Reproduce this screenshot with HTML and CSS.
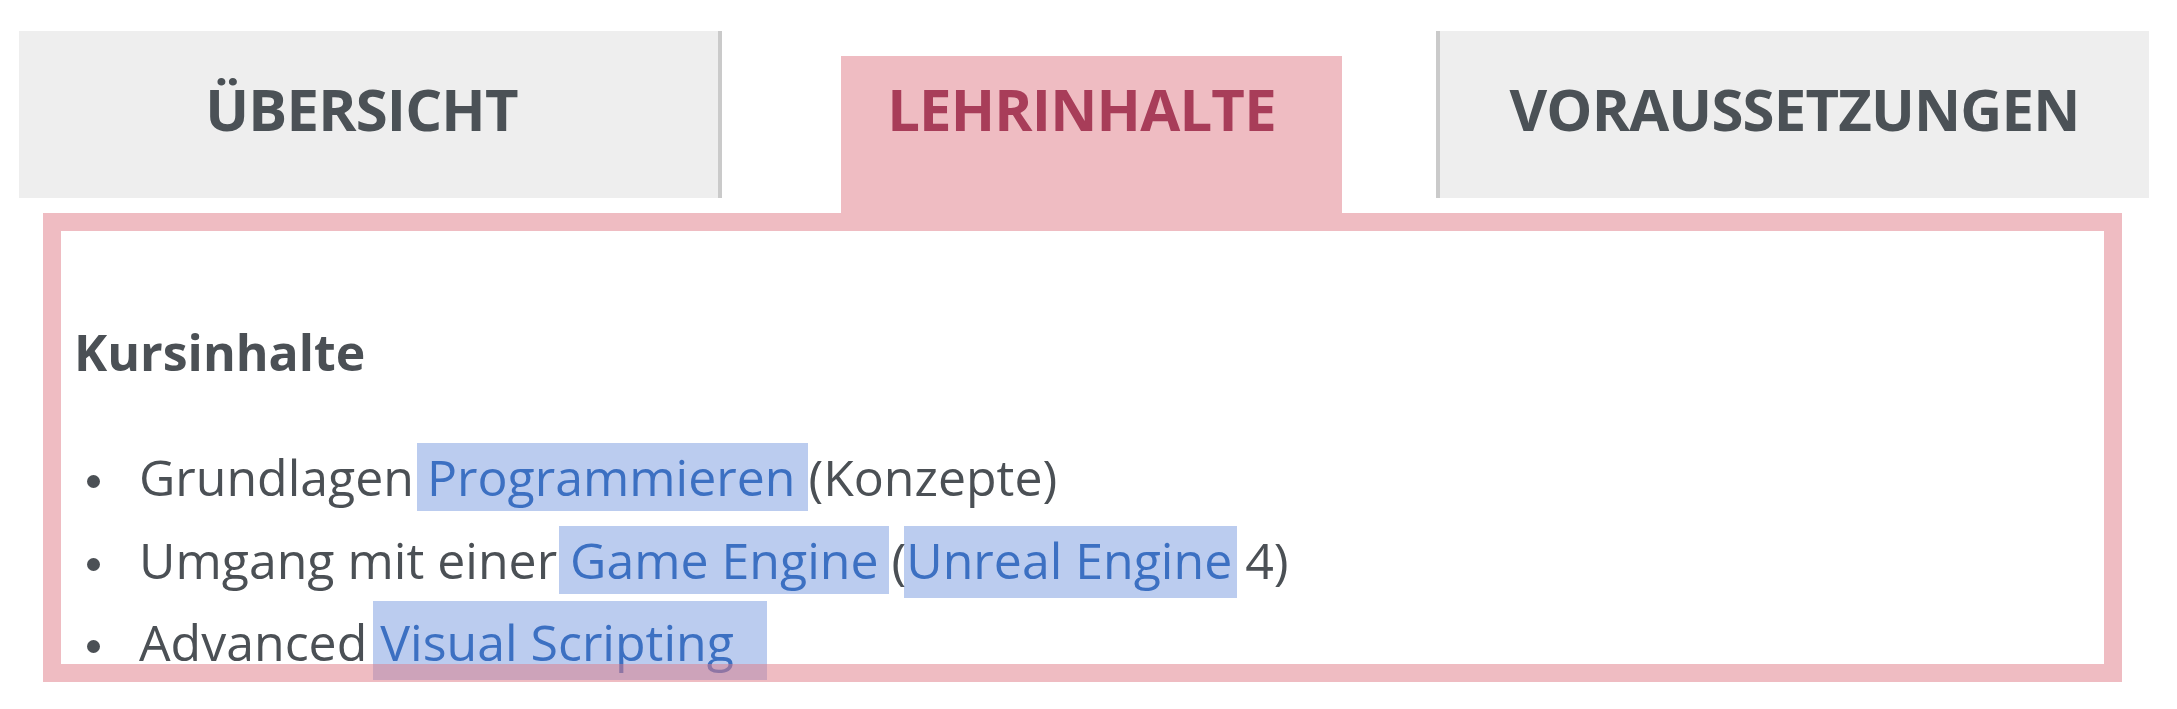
FILE: index.html
```html
<!DOCTYPE html>
<html lang="de">
<head>
<meta charset="utf-8">
<title>Lehrinhalte</title>
<link rel="stylesheet" href="styles.css">
</head>
<body>
<div class="wrap">
  <nav class="tabs">
    <div class="tab tab-first">ÜBERSICHT</div>
    <div class="tab tab-active">LEHRINHALTE</div>
    <div class="tab tab-last">VORAUSSETZUNGEN</div>
  </nav>
  <section class="panel">
    <h3 class="heading">Kursinhalte</h3>
    <ul class="list">
      <li class="item">Grundlagen <a class="link link-prog">Programmieren </a>(Konzepte)</li>
      <li class="item">Umgang mit einer <a class="link link-game">Game Engine</a> (<a class="link link-unreal">Unreal Engine</a> 4)</li>
      <li class="item">Advanced <a class="link link-visual">Visual Scripting</a></li>
    </ul>
  </section>
</div>
</body>
</html>
```
FILE: styles.css
```css
html, body {
  margin: 0;
  padding: 0;
  background: #ffffff;
}

body {
  font-family: "Open Sans", "DejaVu Sans", sans-serif;
  color: #4b5055;
}

.wrap {
  padding: 31px 28px 0 19px;
}

.tabs {
  display: flex;
  align-items: flex-start;
  height: 182px;
}

.tab {
  box-sizing: border-box;
  display: flex;
  justify-content: center;
  font-size: 58px;
  line-height: 60px;
  font-weight: 700;
  letter-spacing: -0.8px;
  color: #4b5156;
  background: #eeeeee;
  height: 167px;
  padding-top: 48px;
}

.tab-first {
  width: 703px;
  padding-right: 14px;
  border-right: 4px solid #cacaca;
}

.tab-active {
  width: 501px;
  margin-left: 119px;
  margin-top: 25px;
  height: 157px;
  padding-top: 23px;
  padding-right: 20px;
  background: #efbcc2;
  color: #a83d59;
}

.tab-last {
  width: 713px;
  margin-left: auto;
  border-left: 4px solid #cacaca;
}

.panel {
  position: relative;
  box-sizing: border-box;
  height: 469px;
  margin: 0 27px 0 24px;
  padding: 107px 27px 0 27px;
}

.panel::after {
  content: "";
  position: absolute;
  inset: 0;
  border: 18px solid rgba(223, 121, 133, 0.5);
  pointer-events: none;
}

.heading {
  margin: 0 0 52px 0;
  padding-left: 4px;
  font-size: 50px;
  line-height: 64px;
  font-weight: 700;
  color: #4b5055;
}

.list {
  margin: 0;
  padding: 0 0 0 69px;
  list-style: none;
}

.item {
  font-size: 50px;
  line-height: 82.5px;
  color: #4b5055;
  white-space: nowrap;
}

.item::before {
  content: "";
  display: inline-block;
  width: 13px;
  height: 13px;
  border-radius: 50%;
  background: #4b5055;
  margin-left: -52px;
  margin-right: 39px;
  vertical-align: 8px;
}

.link {
  color: #3c70c2;
  text-decoration: none;
  background: rgba(60, 110, 210, 0.35);
}

.link-prog {
  padding: 0 0 0 10px;
  margin-left: -10px;
}

.link-game {
  padding: 0 10px 0 11px;
  margin: 0 -10px 0 -11px;
}

.link-unreal {
  padding: 0 5px 4px 2px;
  margin: 0 -5px 0 -2px;
}

.link-visual {
  padding: 7px 33px 4px 7px;
  margin: 0 -33px 0 -7px;
}
```
